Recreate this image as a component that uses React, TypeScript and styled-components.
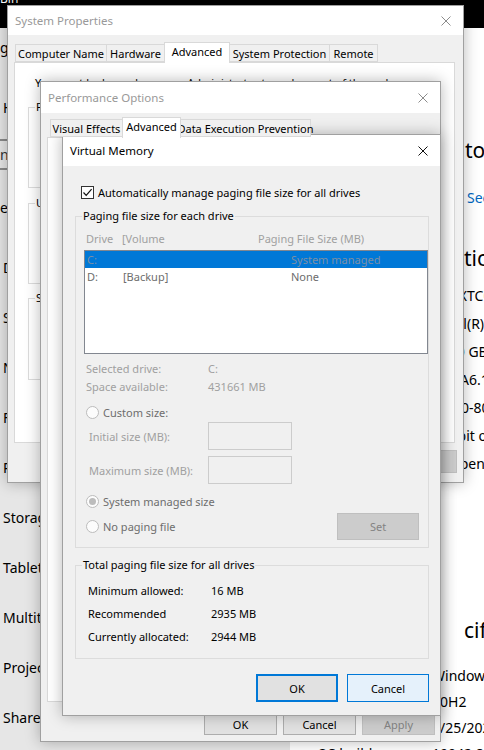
import React from "react";
import styled, { createGlobalStyle } from "styled-components";

const FONT = `"Noto Sans", "Open Sans", "DejaVu Sans", sans-serif`;

const Global = createGlobalStyle`
  html, body { margin: 0; padding: 0; }
  body { width: 484px; height: 750px; overflow: hidden; background: #fff; font-family: ${FONT}; }
  * { box-sizing: border-box; }
`;

/* ---------- desktop & settings background ---------- */
const Desktop = styled.div`
  position: relative;
  width: 484px;
  height: 750px;
  overflow: hidden;
  display: flex;
  flex-direction: column;
  background: #000;
  font-family: ${FONT};
`;
const TopStrip = styled.div`
  height: 28px;
  flex: none;
  background: #000;
`;
const DesktopLabel = styled.div`
  margin-top: -8px;
  color: #fff;
  font-size: 12px;
  line-height: 14px;
`;
const SettingsApp = styled.div`
  flex: 1;
  display: flex;
`;
const Nav = styled.div`
  width: 290px;
  flex: none;
  background: #e6e6e6;
  display: flex;
  flex-direction: column;
  font-size: 14px;
  color: #000;
`;
const NavItem = styled.div<{ $h: number; $mt?: number; $indent?: number }>`
  height: ${(p) => p.$h}px;
  margin-top: ${(p) => p.$mt ?? 0}px;
  padding-left: ${(p) => p.$indent ?? 3}px;
  display: flex;
  align-items: center;
  white-space: nowrap;
`;
const NavSearch = styled.div`
  height: 31px;
  width: 280px;
  margin-top: 7px;
  border-top: 2px solid #8a8a8a;
  border-bottom: 2px solid #8a8a8a;
  display: flex;
  align-items: center;
  font-size: 14px;
  color: #333;
`;
const Content = styled.div`
  flex: 1;
  background: #fff;
  display: flex;
  flex-direction: column;
  font-size: 14px;
  color: #000;
  white-space: nowrap;
  overflow: hidden;
`;
const Fragment = styled.div<{ $indent: number; $h: number; $mt?: number; $big?: boolean; $link?: boolean }>`
  padding-left: ${(p) => p.$indent}px;
  height: ${(p) => p.$h}px;
  margin-top: ${(p) => p.$mt ?? 0}px;
  display: flex;
  align-items: center;
  font-size: ${(p) => (p.$big ? 21 : 14)}px;
  color: ${(p) => (p.$link ? "#0067c0" : "#000")};
`;
const SpecGrid = styled.div<{ $mt: number; $row: number; $label: number }>`
  margin-top: ${(p) => p.$mt}px;
  padding-left: 27px;
  display: grid;
  grid-template-columns: ${(p) => p.$label}px 1fr;
  grid-auto-rows: ${(p) => p.$row}px;
  align-items: center;
`;

/* ---------- window chrome ---------- */
const Win = styled.div<{ $x: number; $y: number; $w: number; $h: number }>`
  position: absolute;
  left: ${(p) => p.$x}px;
  top: ${(p) => p.$y}px;
  width: ${(p) => p.$w}px;
  height: ${(p) => p.$h}px;
  background: #f0f0f0;
  border: 1px solid #a0a0a0;
  box-shadow: 0 0 14px rgba(0, 0, 0, 0.28);
  display: flex;
  flex-direction: column;
  font-family: ${FONT};
  font-size: 11px;
  color: #000;
  white-space: nowrap;
  overflow: hidden;
`;
const TitleBar = styled.div<{ $h: number; $active?: boolean }>`
  height: ${(p) => p.$h}px;
  flex: none;
  background: #fff;
  display: flex;
  align-items: center;
  justify-content: space-between;
  padding: 0 12px 0 7px;
  font-size: 11.5px;
  color: ${(p) => (p.$active ? "#000" : "#999")};
`;
const CloseIcon = ({ color }: { color: string }) => (
  <svg width="10" height="10" viewBox="0 0 10 10">
    <path d="M0.5 0.5 L9.5 9.5 M9.5 0.5 L0.5 9.5" stroke={color} strokeWidth="1" fill="none" />
  </svg>
);

const TabRow = styled.div<{ $mt: number; $pl: number }>`
  display: flex;
  align-items: flex-end;
  height: 20px;
  flex: none;
  margin-top: ${(p) => p.$mt}px;
  padding-left: ${(p) => p.$pl}px;
  position: relative;
  z-index: 1;
`;
const Tab = styled.div<{ $w: number; $active?: boolean }>`
  width: ${(p) => p.$w}px;
  height: ${(p) => (p.$active ? 21 : 18)}px;
  margin-bottom: ${(p) => (p.$active ? -1 : 0)}px;
  margin-right: -1px;
  border: 1px solid #d9d9d9;
  border-bottom: ${(p) => (p.$active ? "none" : "1px solid #d9d9d9")};
  background: ${(p) => (p.$active ? "#fff" : "#f0f0f0")};
  display: flex;
  align-items: center;
  justify-content: center;
  padding-bottom: ${(p) => (p.$active ? 3 : 0)}px;
  position: relative;
  z-index: ${(p) => (p.$active ? 2 : 1)};
`;
const Panel = styled.div<{ $ml: number; $w: number; $h: number }>`
  margin-left: ${(p) => p.$ml}px;
  width: ${(p) => p.$w}px;
  height: ${(p) => p.$h}px;
  flex: none;
  background: #fff;
  border: 1px solid #d9d9d9;
  display: flex;
  flex-direction: column;
`;
const ButtonRow = styled.div<{ $mt: number; $pr: number; $gap: number }>`
  display: flex;
  justify-content: flex-end;
  gap: ${(p) => p.$gap}px;
  margin-top: ${(p) => p.$mt}px;
  padding-right: ${(p) => p.$pr}px;
  flex: none;
`;
type BtnKind = "normal" | "default" | "hover" | "disabled";
const Button = styled.div<{ $w: number; $h: number; $kind?: BtnKind }>`
  width: ${(p) => p.$w}px;
  height: ${(p) => p.$h}px;
  display: flex;
  align-items: center;
  justify-content: center;
  font-size: 11px;
  border: 1px solid
    ${(p) =>
      p.$kind === "default" || p.$kind === "hover"
        ? "#0078d7"
        : p.$kind === "disabled"
        ? "#bfbfbf"
        : "#adadad"};
  box-shadow: ${(p) => (p.$kind === "default" ? "inset 0 0 0 1px #0078d7" : "none")};
  background: ${(p) =>
    p.$kind === "hover" ? "#e5f1fb" : p.$kind === "disabled" ? "#cccccc" : "#e1e1e1"};
  color: ${(p) => (p.$kind === "disabled" ? "#838383" : "#000")};
`;

/* ---------- system properties contents ---------- */
const PanelBody = styled.div`
  padding: 11px 13px 0 13px;
  display: flex;
  flex-direction: column;
`;
const Notice = styled.div`
  height: 16px;
  display: flex;
  align-items: center;
  padding-left: 7px;
`;
const GroupBox = styled.div<{ $mt: number; $h: number; $pad?: string }>`
  position: relative;
  margin-top: ${(p) => p.$mt}px;
  height: ${(p) => p.$h}px;
  flex: none;
  border: 1px solid #dcdcdc;
  padding: ${(p) => p.$pad ?? "0"};
  display: flex;
  flex-direction: column;
`;
const GroupLabel = styled.span<{ $bg: string }>`
  position: absolute;
  top: -9px;
  left: 6px;
  padding: 0 1px;
  line-height: 16px;
  background: ${(p) => p.$bg};
  color: #000;
`;

/* ---------- virtual memory contents ---------- */
const DlgBody = styled.div`
  flex: 1;
  padding: 20px 11px 0 12px;
  display: flex;
  flex-direction: column;
`;
const CheckRow = styled.div`
  display: flex;
  align-items: center;
  gap: 4px;
  height: 13px;
  margin-left: 6px;
`;
const CheckBox = styled.div`
  width: 13px;
  height: 13px;
  border: 1px solid #333;
  background: #fff;
  display: flex;
  align-items: center;
  justify-content: center;
`;
const ColumnHeader = styled.div`
  display: flex;
  height: 16px;
  align-items: center;
  padding-left: 2px;
  color: #a0a0a0;
`;
const Col = styled.div<{ $w?: number }>`
  width: ${(p) => (p.$w ? `${p.$w}px` : "auto")};
  flex: ${(p) => (p.$w ? "none" : "1")};
`;
const ListBox = styled.div`
  margin-top: 4px;
  height: 104px;
  border: 1px solid #828790;
  background: #fff;
  display: flex;
  flex-direction: column;
`;
const ListRow = styled.div<{ $selected?: boolean }>`
  height: 17px;
  display: flex;
  align-items: center;
  padding-left: 2px;
  background: ${(p) => (p.$selected ? "#0078d7" : "transparent")};
  color: ${(p) => (p.$selected ? "#7b8fa5" : "#6d6d6d")};
`;
const InfoRow = styled.div<{ $mt: number }>`
  display: flex;
  align-items: center;
  height: 16px;
  margin-top: ${(p) => p.$mt}px;
  padding-left: 2px;
  color: #a0a0a0;
`;
const RadioRow = styled.div<{ $mt?: number }>`
  display: flex;
  align-items: center;
  gap: 4px;
  height: 13px;
  margin-top: ${(p) => p.$mt ?? 0}px;
  padding-left: 2px;
  color: #6d6d6d;
`;
const Radio = styled.div<{ $on?: boolean }>`
  width: 13px;
  height: 13px;
  border-radius: 50%;
  border: 1px solid #bcbcbc;
  background: #fcfcfc;
  display: flex;
  align-items: center;
  justify-content: center;
  &::after {
    content: "";
    width: 7px;
    height: 7px;
    border-radius: 50%;
    background: ${(p) => (p.$on ? "#bcbcbc" : "transparent")};
  }
`;
const SizeRow = styled.div<{ $mt: number }>`
  display: flex;
  align-items: center;
  height: 28px;
  margin-top: ${(p) => p.$mt}px;
  padding-left: 5px;
  color: #a0a0a0;
`;
const TextField = styled.div`
  width: 84px;
  height: 28px;
  border: 1px solid #cccccc;
  background: #f0f0f0;
`;
const BottomBlock = styled.div`
  display: flex;
  align-items: flex-start;
  margin-top: 11px;
`;
const RadioStack = styled.div`
  display: flex;
  flex-direction: column;
  gap: 12px;
`;
const SetButton = styled(Button)`
  margin-left: auto;
  margin-top: 18px;
  margin-right: 9px;
`;
const TotalRow = styled.div<{ $mt?: number }>`
  display: flex;
  align-items: center;
  height: 16px;
  margin-top: ${(p) => p.$mt ?? 0}px;
`;

const Check = () => (
  <svg width="11" height="11" viewBox="0 0 11 11">
    <path d="M1.5 5.5 L4.2 8.3 L9.6 2.2" stroke="#111" strokeWidth="1.2" fill="none" />
  </svg>
);

export default function App() {
  return (
    <>
      <Global />
      <Desktop>
        <TopStrip>
          <DesktopLabel>Bin</DesktopLabel>
        </TopStrip>
        <SettingsApp>
          <Nav>
            <NavItem $h={38} $indent={0}>g</NavItem>
            <NavItem $h={50} $mt={16}>Home</NavItem>
            <NavSearch>nd a setting</NavSearch>
            <NavItem $h={50} $mt={12} $indent={0}>er</NavItem>
            <NavItem $h={50} $mt={10}>Display</NavItem>
            <NavItem $h={50}>Sound</NavItem>
            <NavItem $h={50}>Notifications &amp; actions</NavItem>
            <NavItem $h={50}>Focus assist</NavItem>
            <NavItem $h={50}>Power &amp; sleep</NavItem>
            <NavItem $h={50}>Storage</NavItem>
            <NavItem $h={50}>Tablet</NavItem>
            <NavItem $h={50}>Multitasking</NavItem>
            <NavItem $h={50}>Projecting to this PC</NavItem>
            <NavItem $h={50}>Shared experiences</NavItem>
          </Nav>
          <Content>
            <Fragment $indent={175} $h={30} $mt={107} $big>tor</Fragment>
            <Fragment $indent={177} $h={20} $mt={22} $link>See details</Fragment>
            <Fragment $indent={174} $h={30} $mt={36} $big>tions</Fragment>
            <SpecGrid $mt={8} $row={28} $label={120}>
              <span>Device name</span><span>PC-XTC01</span>
              <span>Processor</span><span>Intel(R) Core(TM)</span>
              <span>Installed RAM</span><span>16.0 GB</span>
              <span>Device ID</span><span>84FA6.1E-9D2B</span>
              <span>Product ID</span><span>0330-80000</span>
              <span>System type</span><span>64-bit operating system</span>
              <span>Pen and touch</span><span>No pen or touch input</span>
            </SpecGrid>
            <Fragment $indent={174} $h={30} $mt={138} $big>cifications</Fragment>
            <SpecGrid $mt={17} $row={26} $label={115}>
              <span>Edition</span><span>Windows 10 Pro</span>
              <span>Version</span><span>20H2</span>
              <span>Installed on</span><span>7/25/2020</span>
              <span>OS build</span><span>19042.804</span>
            </SpecGrid>
          </Content>
        </SettingsApp>

        {/* System Properties */}
        <Win $x={7} $y={5} $w={457} $h={478}>
          <TitleBar $h={29}>
            <span>System Properties</span>
            <CloseIcon color="#8c8c8c" />
          </TitleBar>
          <TabRow $mt={7} $pl={7}>
            <Tab $w={92}>Computer Name</Tab>
            <Tab $w={59}>Hardware</Tab>
            <Tab $w={66} $active>Advanced</Tab>
            <Tab $w={101}>System Protection</Tab>
            <Tab $w={49}>Remote</Tab>
          </TabRow>
          <Panel $ml={6} $w={441} $h={381}>
            <PanelBody>
              <Notice>You must be logged on as an Administrator to make most of these changes.</Notice>
              <GroupBox $mt={17} $h={81}>
                <GroupLabel $bg="#fff">Performance</GroupLabel>
              </GroupBox>
              <GroupBox $mt={15} $h={81}>
                <GroupLabel $bg="#fff">User Profiles</GroupLabel>
              </GroupBox>
              <GroupBox $mt={14} $h={82}>
                <GroupLabel $bg="#fff">Startup and Recovery</GroupLabel>
              </GroupBox>
            </PanelBody>
          </Panel>
          <ButtonRow $mt={7} $pr={6} $gap={6}>
            <Button $w={75} $h={23}>OK</Button>
            <Button $w={75} $h={23}>Cancel</Button>
            <Button $w={75} $h={23} $kind="disabled">Apply</Button>
          </ButtonRow>
        </Win>

        {/* Performance Options */}
        <Win $x={40} $y={81} $w={401} $h={661}>
          <TitleBar $h={31}>
            <span>Performance Options</span>
            <CloseIcon color="#8c8c8c" />
          </TitleBar>
          <TabRow $mt={4} $pl={9}>
            <Tab $w={73}>Visual Effects</Tab>
            <Tab $w={59} $active>Advanced</Tab>
            <Tab $w={131}>Data Execution Prevention</Tab>
          </TabRow>
          <Panel $ml={6} $w={387} $h={565} />
          <ButtonRow $mt={11} $pr={5} $gap={6}>
            <Button $w={73} $h={22}>OK</Button>
            <Button $w={73} $h={22}>Cancel</Button>
            <Button $w={73} $h={22} $kind="disabled">Apply</Button>
          </ButtonRow>
        </Win>

        {/* Virtual Memory */}
        <Win $x={62} $y={134} $w={379} $h={582}>
          <TitleBar $h={31} $active>
            <span>Virtual Memory</span>
            <CloseIcon color="#111" />
          </TitleBar>
          <DlgBody>
            <CheckRow>
              <CheckBox>
                <Check />
              </CheckBox>
              <span>Automatically manage paging file size for all drives</span>
            </CheckRow>

            <GroupBox $mt={17} $h={332} $pad="13px 0 0 8px">
              <GroupLabel $bg="#f0f0f0">Paging file size for each drive</GroupLabel>
              <ColumnHeader>
                <Col $w={36}>Drive</Col>
                <Col $w={136}>[Volume</Col>
                <Col>Paging File Size (MB)</Col>
              </ColumnHeader>
              <ListBox>
                <ListRow $selected>
                  <Col $w={36}>C:</Col>
                  <Col $w={168}></Col>
                  <Col>System managed</Col>
                </ListRow>
                <ListRow>
                  <Col $w={36}>D:</Col>
                  <Col $w={168}>[Backup]</Col>
                  <Col>None</Col>
                </ListRow>
              </ListBox>
              <InfoRow $mt={6}>
                <Col $w={122}>Selected drive:</Col>
                <Col>C:</Col>
              </InfoRow>
              <InfoRow $mt={2}>
                <Col $w={122}>Space available:</Col>
                <Col>431661 MB</Col>
              </InfoRow>
              <RadioRow $mt={12}>
                <Radio />
                <span>Custom size:</span>
              </RadioRow>
              <SizeRow $mt={3}>
                <Col $w={119}>Initial size (MB):</Col>
                <TextField />
              </SizeRow>
              <SizeRow $mt={6}>
                <Col $w={119}>Maximum size (MB):</Col>
                <TextField />
              </SizeRow>
              <BottomBlock>
                <RadioStack>
                  <RadioRow>
                    <Radio $on />
                    <span>System managed size</span>
                  </RadioRow>
                  <RadioRow>
                    <Radio />
                    <span>No paging file</span>
                  </RadioRow>
                </RadioStack>
                <SetButton $w={82} $h={27} $kind="disabled">Set</SetButton>
              </BottomBlock>
            </GroupBox>

            <GroupBox $mt={17} $h={94} $pad="16px 0 0 12px">
              <GroupLabel $bg="#f0f0f0">Total paging file size for all drives</GroupLabel>
              <TotalRow>
                <Col $w={123}>Minimum allowed:</Col>
                <Col>16 MB</Col>
              </TotalRow>
              <TotalRow $mt={7}>
                <Col $w={123}>Recommended</Col>
                <Col>2935 MB</Col>
              </TotalRow>
              <TotalRow $mt={7}>
                <Col $w={123}>Currently allocated:</Col>
                <Col>2944 MB</Col>
              </TotalRow>
            </GroupBox>

            <ButtonRow $mt={15} $pr={0} $gap={9}>
              <Button $w={82} $h={28} $kind="default">OK</Button>
              <Button $w={82} $h={28} $kind="hover">Cancel</Button>
            </ButtonRow>
          </DlgBody>
        </Win>
      </Desktop>
    </>
  );
}
